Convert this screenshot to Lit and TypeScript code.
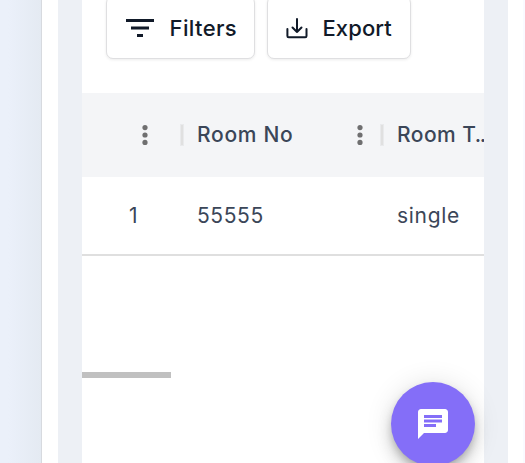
import { LitElement, html, css } from "lit";
import { customElement } from "lit/decorators.js";

@customElement("kebab-icon")
class KebabIcon extends LitElement {
  static styles = css`
    :host { display: block; width: 6px; height: 20px; }
    svg { display: block; }
  `;
  render() {
    return html`<svg width="6" height="20" viewBox="0 0 6 20" fill="#6f6f70">
      <circle cx="3" cy="2.6" r="2.6" /><circle cx="3" cy="10" r="2.6" /><circle cx="3" cy="17.4" r="2.6" />
    </svg>`;
  }
}

@customElement("app-root")
class AppRoot extends LitElement {
  static styles = css`
    :host {
      display: flex;
      position: relative;
      width: 525px;
      height: 463px;
      overflow: hidden;
      background: #fff;
      font-family: Inter, "Noto Sans", sans-serif;
      color: #3b4658;
    }
    * { box-sizing: border-box; }
    .side {
      flex: none;
      width: 42px;
      border-right: 1px solid #d7dadf;
      background: linear-gradient(90deg, #ebf0fa 0, #ebf0fa 8px, #e4eaf2 41px);
    }
    .panel {
      flex: none;
      width: 450px;
      margin-left: 16px;
      padding: 0 24px;
      background: #edf0f5;
    }
    .edge { flex: none; width: 2px; margin-left: 15px; background: #fafaff; }
    .content { height: 463px; overflow: hidden; background: #fff; }
    .toolbar { display: flex; gap: 12px; height: 93px; padding-left: 24px; }
    .btn {
      display: flex;
      align-items: center;
      height: 63px;
      margin-top: -4px;
      border: 1px solid #dfdfe1;
      border-radius: 7px;
      box-shadow: 0 1px 3px rgba(0, 0, 0, 0.08);
      background: #fff;
      color: #111a29;
      font-size: 22px;
      line-height: 32px;
      font-weight: 500;
      white-space: nowrap;
    }
    .btn svg { display: block; flex: none; }
    .filters { width: 149px; padding-left: 19px; }
    .filters span { margin-left: 15.6px; letter-spacing: 0.35px; }
    .export { width: 144px; padding-left: 18px; }
    .export span { margin-left: 14.5px; letter-spacing: 0.1px; }
    .row { display: grid; grid-template-columns: 98px 200px 200px; width: 498px; align-items: center; }
    .head {
      height: 84px;
      background: #f4f5f7;
      font-size: 21px;
      font-weight: 500;
    }
    .cell { display: flex; align-items: center; height: 100%; white-space: nowrap; }
    .head .cell { justify-content: space-between; padding-right: 17px; }
    .head .first { justify-content: flex-end; padding-right: 32px; }
    .name { display: flex; align-items: center; line-height: 26px; }
    .sep {
      width: 4px;
      height: 22px;
      margin-right: 13px;
      border: 1px solid #e9eaec;
      background: #e0e0e0;
    }
    .no { letter-spacing: 0.7px; }
    .type { letter-spacing: 0.45px; }
    .dots { margin-left: -1.5px; letter-spacing: -1.6px; }
    .body { height: 79px; border-bottom: 2px solid #dfdfdf; font-size: 21px; }
    .body .cell { padding-left: 17px; }
    .body .first { padding-left: 47px; }
    .num { letter-spacing: 0.6px; }
    .kind { letter-spacing: 0.7px; }
    .thumb { width: 89px; height: 6px; margin-top: 116px; background: #c0c0c0; }
    .fab {
      position: absolute;
      left: 391px;
      top: 382px;
      display: flex;
      align-items: center;
      justify-content: center;
      width: 84px;
      height: 84px;
      border-radius: 50%;
      background: #846ef8;
      box-shadow: 0 5px 8px -2px rgba(0, 0, 0, 0.24), 0 10px 16px rgba(0, 0, 0, 0.14), 0 2px 28px rgba(0, 0, 0, 0.12);
    }
  `;
  render() {
    return html`
      <div class="side"></div>
      <div class="panel">
        <div class="content">
          <div class="toolbar">
            <div class="btn filters">
              <svg width="28" height="20" viewBox="0 0 28 20" fill="#111a29">
                <path d="M0 1h28v3H0zM5 8.500h18v3H5zM11 16h6v3h-6z" />
              </svg>
              <span>Filters</span>
            </div>
            <div class="btn export">
              <svg width="22" height="22" viewBox="0 0 22 22" fill="none" stroke="#111a29" stroke-width="2" stroke-linecap="round" stroke-linejoin="round">
                <path d="M1.400 12v7q0 1.300 1.300 1.300h16.500q1.300 0 1.300-1.300v-7M11 2v13M6.500 10.500 11 15l4.500-4.500" />
              </svg>
              <span>Export</span>
            </div>
          </div>
          <div class="row head">
            <div class="cell first"><kebab-icon></kebab-icon></div>
            <div class="cell">
              <div class="name"><div class="sep"></div><span class="no">Room No</span></div>
              <kebab-icon></kebab-icon>
            </div>
            <div class="cell">
              <div class="name"><div class="sep"></div><span class="type">Room T<span class="dots">..</span></span></div>
            </div>
          </div>
          <div class="row body">
            <div class="cell first">1</div>
            <div class="cell"><span class="num">55555</span></div>
            <div class="cell"><span class="kind">single</span></div>
          </div>
          <div class="thumb"></div>
        </div>
      </div>
      <div class="edge"></div>
      <div class="fab">
        <svg width="36" height="36" viewBox="0 0 24 24" fill="#fff">
          <path d="M20 2H4c-1.100 0-1.990.9-1.990 2L2 22l4-4h14c1.100 0 2-.9 2-2V4c0-1.100-.9-2-2-2zM6 9h12v2H6V9zm8 5H6v-2h8v2zm4-6H6V6h12v2z" />
        </svg>
      </div>
    `;
  }
}
